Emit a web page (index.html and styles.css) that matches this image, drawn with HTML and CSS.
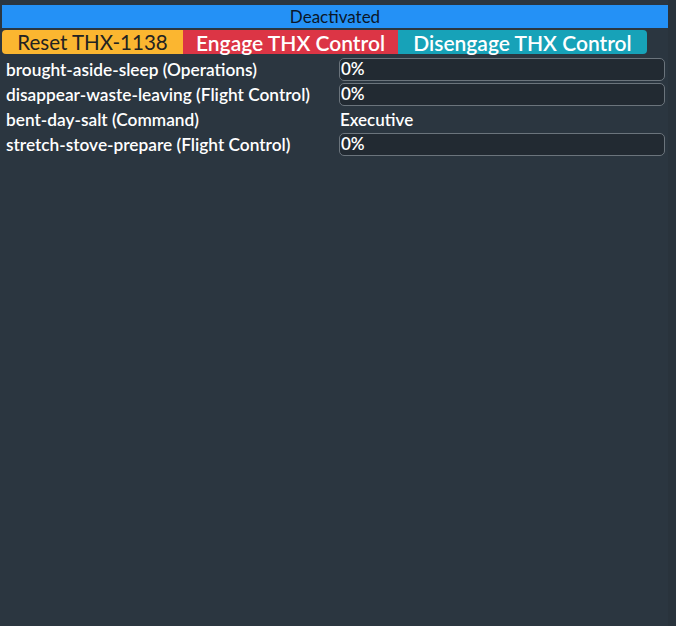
FILE: index.html
```html
<!DOCTYPE html>
<html>
<head>
<meta charset="utf-8">
<link rel="stylesheet" href="styles.css">
</head>
<body>
<div class="app">
  <div class="main">
    <div class="status">Deactivated</div>
    <div class="buttons">
      <div class="btn btn-reset">Reset THX-1138</div>
      <div class="btn btn-engage">Engage THX Control</div>
      <div class="btn btn-disengage">Disengage THX Control</div>
    </div>
    <div class="rows">
      <div class="row"><div class="label">brought-aside-sleep (Operations)</div><div class="field input">0%</div></div>
      <div class="row"><div class="label">disappear-waste-leaving (Flight Control)</div><div class="field input">0%</div></div>
      <div class="row"><div class="label">bent-day-salt (Command)</div><div class="field plain">Executive</div></div>
      <div class="row"><div class="label">stretch-stove-prepare (Flight Control)</div><div class="field input">0%</div></div>
    </div>
  </div>
  <div class="side"></div>
</div>
</body>
</html>
```
FILE: styles.css
```css
html, body {
  margin: 0;
  padding: 0;
  background: #2b3640;
  width: 676px;
  height: 626px;
  overflow: hidden;
  font-family: Lato, "Open Sans", sans-serif;
  color: #ffffff;
}
.app {
  display: flex;
  height: 626px;
}
.main {
  width: 668px;
  padding: 5px 0 0 2px;
  box-sizing: border-box;
}
.side {
  flex: 1;
  background: #29333c;
}
.status {
  background: #2491f6;
  color: #0b1628;
  height: 23px;
  line-height: 24px;
  text-align: center;
  font-size: 17px;
}
.buttons {
  display: flex;
  margin-top: 2px;
  height: 24px;
}
.btn {
  font-size: 21px;
  line-height: 25px;
  font-weight: 600;
  text-align: center;
  color: #ffffff;
}
.btn-reset {
  width: 181px;
  background: #fbb630;
  color: #222222;
  font-weight: 400;
  font-size: 20.5px;
  border-radius: 4px 0 0 4px;
}
.btn-engage {
  width: 215px;
  background: #dc3545;
}
.btn-disengage {
  width: 249px;
  background: #17a2b8;
  border-radius: 0 4px 4px 0;
}
.rows {
  margin-top: 3px;
}
.row {
  display: flex;
  align-items: center;
  height: 25px;
}
.label {
  width: 337px;
  padding-left: 4px;
  box-sizing: border-box;
  font-size: 17.3px;
  font-weight: 600;
  white-space: nowrap;
}
.field {
  width: 326px;
  height: 23px;
  box-sizing: border-box;
  font-size: 17px;
  font-weight: 600;
  line-height: 20px;
  padding-left: 1px;
}
.input {
  background: #222a32;
  border: 1.5px solid #6b747c;
  border-radius: 5px;
}
.plain {
  line-height: 23px;
}
```
